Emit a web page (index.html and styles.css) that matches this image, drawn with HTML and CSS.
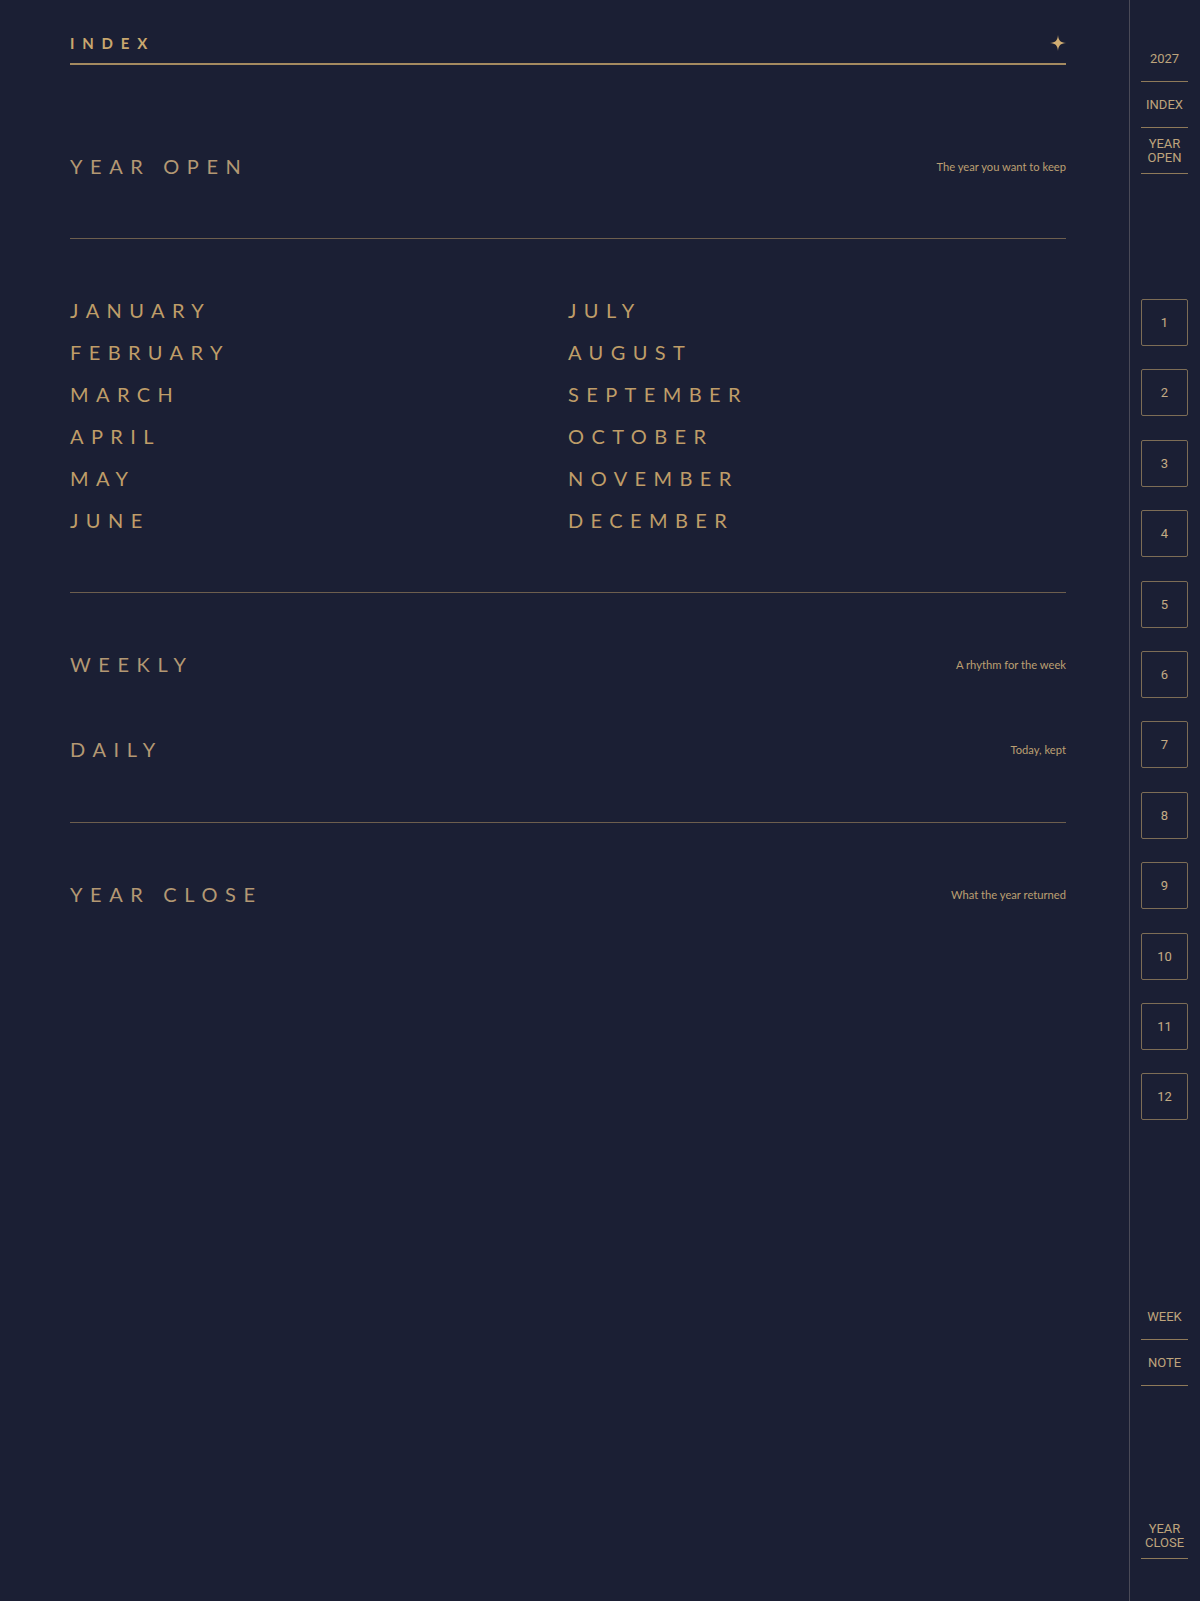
FILE: index.html
```html
<!DOCTYPE html>
<html>
  <head>
    <title>2027 Index</title>
    <meta charset="utf-8">
    <link rel="stylesheet" href="styles.css">
  </head>
  <body>
  <div class="page">
    <main class="index">
      <header class="index-head">
        <h1>INDEX</h1>
        <svg class="spark" width="16" height="16" viewBox="0 0 16 16">
          <path d="M8 0 C8.5 5.6 10.4 7.5 16 8 C10.4 8.5 8.5 10.4 8 16 C7.5 10.4 5.6 8.5 0 8 C5.6 7.5 7.5 5.6 8 0 Z" fill="#d1ad72"/>
        </svg>
      </header>

      <section class="block block-open">
        <div class="entry">
          <span class="entry-title">YEAR OPEN</span>
          <span class="entry-note">The year you want to keep</span>
        </div>
      </section>

      <!-- months, two columns -->
      <section class="block months">
        <ul class="month-col">
          <li>JANUARY</li>
          <li>FEBRUARY</li>
          <li>MARCH</li>
          <li>APRIL</li>
          <li>MAY</li>
          <li>JUNE</li>
        </ul>
        <ul class="month-col">
          <li>JULY</li>
          <li>AUGUST</li>
          <li>SEPTEMBER</li>
          <li>OCTOBER</li>
          <li>NOVEMBER</li>
          <li>DECEMBER</li>
        </ul>
      </section>

      <section class="block block-rhythm">
        <div class="entry">
          <span class="entry-title">WEEKLY</span>
          <span class="entry-note">A rhythm for the week</span>
        </div>
        <div class="entry">
          <span class="entry-title">DAILY</span>
          <span class="entry-note">Today, kept</span>
        </div>
      </section>

      <section class="block block-close">
        <div class="entry">
          <span class="entry-title">YEAR CLOSE</span>
          <span class="entry-note">What the year returned</span>
        </div>
      </section>
    </main>

    <!-- side tabs -->
    <nav class="rail">
      <div class="rail-group rail-top">
        <div class="tab">2027</div>
        <div class="tab">INDEX</div>
        <div class="tab">YEAR<br>OPEN</div>
      </div>
      <div class="rail-group rail-months">
        <div class="num">1</div>
        <div class="num">2</div>
        <div class="num">3</div>
        <div class="num">4</div>
        <div class="num">5</div>
        <div class="num">6</div>
        <div class="num">7</div>
        <div class="num">8</div>
        <div class="num">9</div>
        <div class="num">10</div>
        <div class="num">11</div>
        <div class="num">12</div>
      </div>
      <div class="rail-group rail-notes">
        <div class="tab">WEEK</div>
        <div class="tab">NOTE</div>
      </div>
      <div class="rail-group rail-end">
        <div class="tab">YEAR<br>CLOSE</div>
      </div>
    </nav>
  </div>
  </body>
</html>
```

FILE: styles.css
```css
html, body{
  margin: 0;
  padding: 0;
  background: #1b1f34;
}

body{
  font-family: Lato, "Noto Sans", sans-serif;
  color: #c4a16a;
}

.page{
  display: flex;
  min-height: 1601px;
}

/* main column */
.index{
  flex: 1;
  padding: 0 63px 0 70px;
}

.index-head{
  display: flex;
  justify-content: space-between;
  align-items: center;
  padding: 32px 0 9px;
  border-bottom: 2px solid #a48a60;
}

.index-head h1{
  margin: 0;
  font-size: 15px;
  line-height: 22px;
  font-weight: 700;
  letter-spacing: 0.52em;
  color: #c9a76e;
}

.spark{
  display: block;
}

.block{
  padding: 50px 0 51px;
  border-bottom: 1px solid rgba(176, 145, 100, 0.55);
}

.block-open{
  padding-top: 80px;
}

.block-rhythm{
  display: flex;
  flex-direction: column;
  gap: 43px;
  padding-bottom: 52px;
}

.block-close{
  border-bottom: 0;
}

.entry{
  display: flex;
  justify-content: space-between;
  align-items: center;
  height: 42px;
}

.entry-title{
  font-size: 20px;
  letter-spacing: 0.38em;
  color: #b39873;
}

.entry-note{
  font-size: 11.2px;
  color: #bc9f72;
}

.months{
  display: grid;
  grid-template-columns: 1fr 1fr;
}

.month-col{
  list-style: none;
  margin: 0;
  padding: 0;
}

.month-col li{
  height: 42px;
  line-height: 42px;
  font-size: 20px;
  letter-spacing: 0.37em;
  color: #bf9d68;
}

/* side rail */
.rail{
  width: 47px;
  padding: 36px 12px 42px 11px;
  border-left: 1px solid #4a4a57;
  display: flex;
  flex-direction: column;
  font-family: Roboto, "Liberation Sans", sans-serif;
  font-size: 13px;
  color: #bea47c;
}

.tab{
  box-sizing: border-box;
  height: 46px;
  display: flex;
  align-items: center;
  justify-content: center;
  text-align: center;
  line-height: 14px;
  border-bottom: 1px solid #8f7a5a;
}

.rail-months{
  display: flex;
  flex-direction: column;
  gap: 23.4px;
  margin-top: 125px;
}

.num{
  box-sizing: border-box;
  height: 47px;
  display: flex;
  align-items: center;
  justify-content: center;
  border: 1px solid #7d6d56;
  border-radius: 2px;
  color: #c3ab84;
}

.rail-notes{
  margin-top: 174px;
}

.rail-end{
  margin-top: auto;
}
```
